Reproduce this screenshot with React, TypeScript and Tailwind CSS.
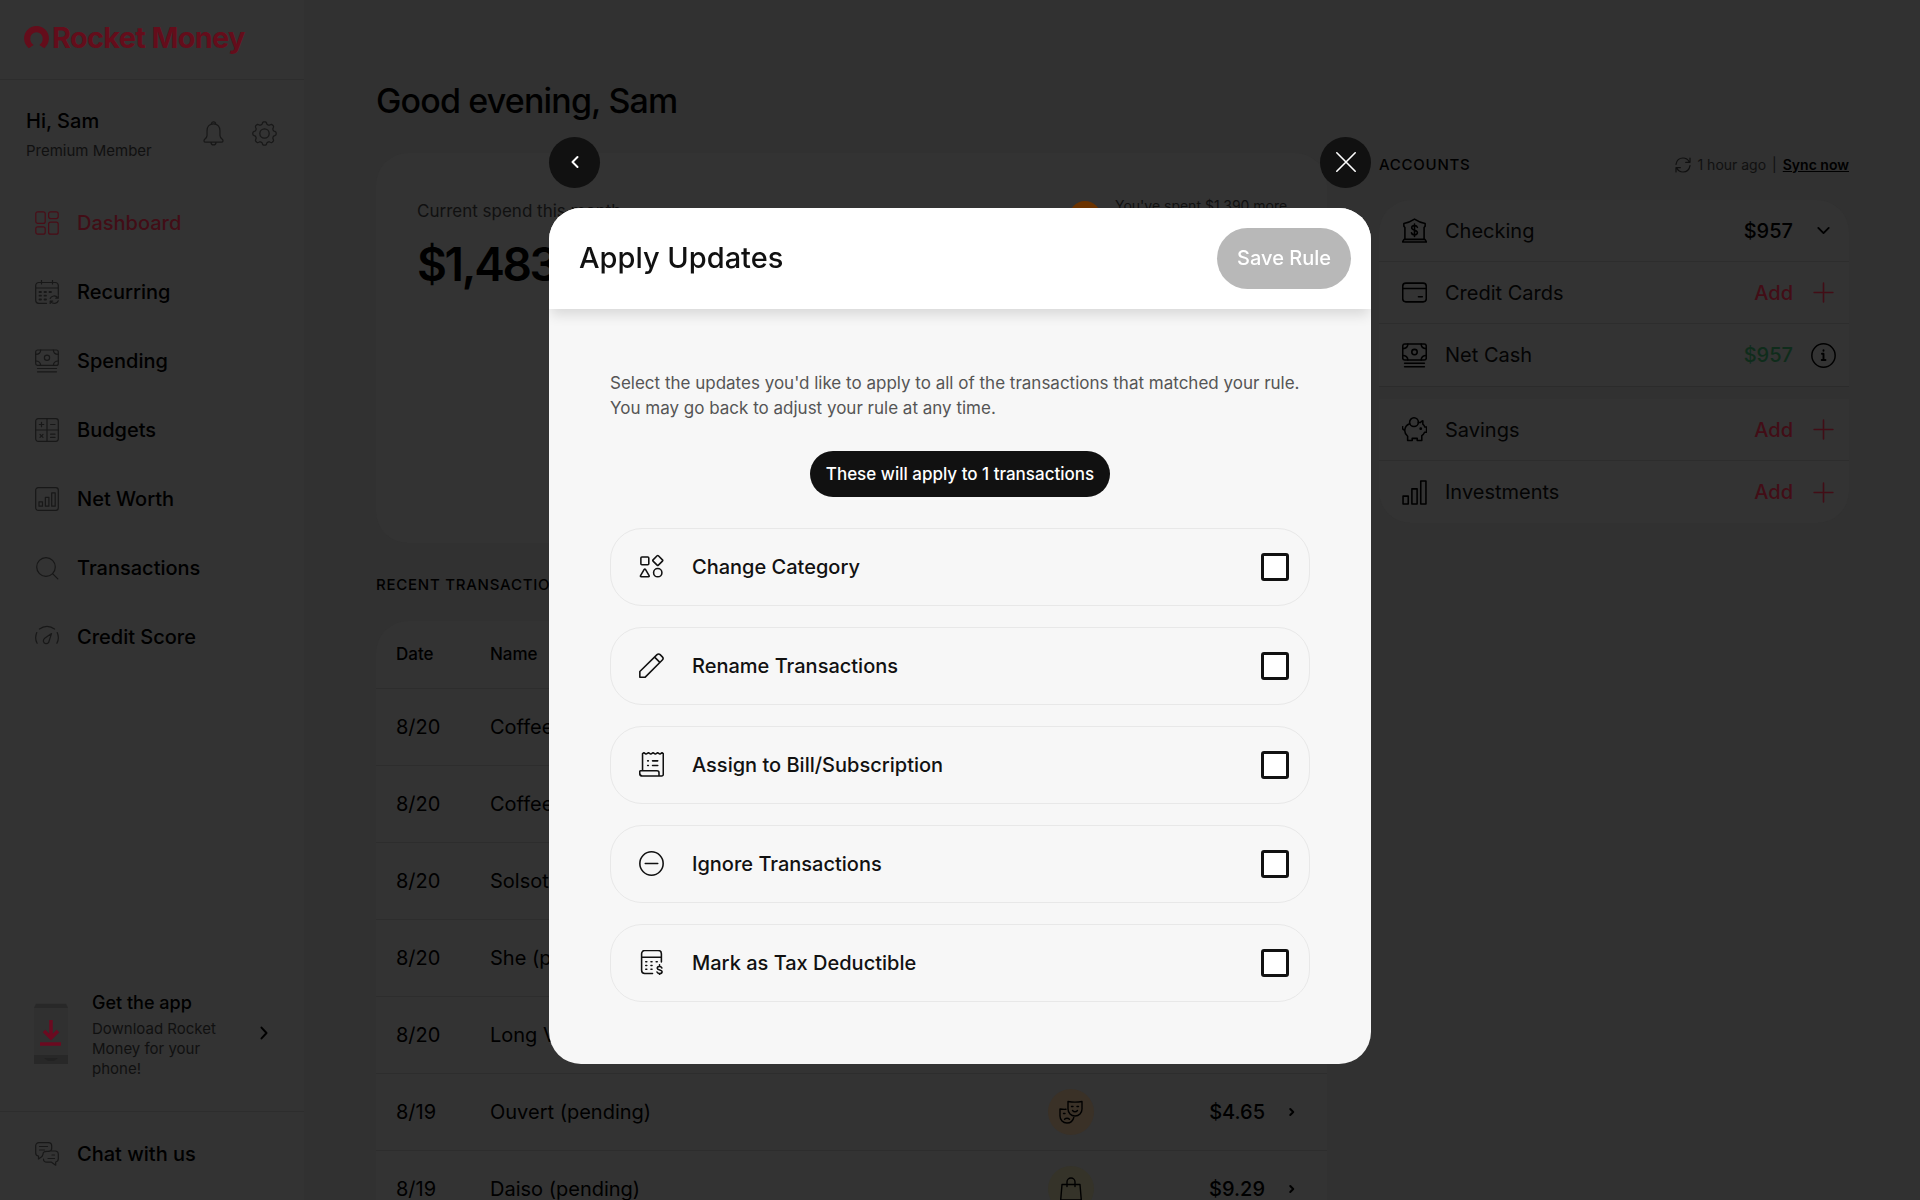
import { useState } from "react";
import type { ReactNode } from "react";

function Icon({ children, size = "size-6", width = 1.2 }: { children: ReactNode; size?: string; width?: number }) {
  return (
    <svg
      viewBox="0 0 24 24"
      className={`${size} shrink-0`}
      fill="none"
      stroke="currentColor"
      strokeWidth={width}
      strokeLinecap="round"
      strokeLinejoin="round"
      aria-hidden="true"
    >
      {children}
    </svg>
  );
}

const gearOutline =
  Array.from({ length: 96 }, (_, i) => {
    const a = (i / 96) * Math.PI * 2;
    const r = 10.1 + 1.2 * Math.tanh(1.8 * Math.cos(8 * a));
    return `${i === 0 ? "M" : "L"}${(12 + r * Math.cos(a)).toFixed(2)} ${(12 + r * Math.sin(a)).toFixed(2)}`;
  }).join("") + "z";

const cash = (
  <>
    <rect x=".7" y="1" width="22.6" height="15.4" rx="2" />
    <circle cx="12" cy="8.7" r="2.6" />
    <path d="M5.6 1c0 2.800-2 4.400-4.900 4.400M18.400 1c0 2.800 2 4.400 4.900 4.400M5.600 16.400c0-2.800-2-4.400-4.900-4.400M18.400 16.400c0-2.800 2-4.400 4.900-4.400M2.500 19.500h19M2.500 22.800h19" />
  </>
);

const bars = <path d="M1 15.500h5v7.500H1zM9.500 8.500h5V23h-5zM18 1h5v22h-5z" />;

const navItems: { label: string; active?: boolean; icon: ReactNode }[] = [
  {
    label: "Dashboard",
    active: true,
    icon: (
      <>
        <rect x=".8" y=".8" width="9.400" height="11.600" rx="2" />
        <rect x="13.600" y=".8" width="9.600" height="6.800" rx="2" />
        <rect x=".8" y="15.800" width="9.400" height="7.400" rx="2" />
        <rect x="13.600" y="11.200" width="9.600" height="12" rx="2" />
      </>
    ),
  },
  {
    label: "Recurring",
    icon: (
      <>
        <path d="M23.300 14.500V5.500a3 3 0 0 0-3-3H3.700a3 3 0 0 0-3 3v14.800a3 3 0 0 0 3 3h7.800M.7 8h22.600M6.500 .5v3.500M17.500 .5v3.500" />
        <path d="M4.500 12h1.500M9.500 12H11M14.500 12H16M4.500 15.700h1.500M9.500 15.700H11M4.500 19.500h1.500M9.500 19.500H11" strokeWidth="1.800" />
        <path d="M15.200 18.500c1-2.800 5.400-3.600 7.500-.8M23.300 15.600v2.600h-2.500M23.300 20.800c-1 2.800-5.400 3.600-7.500.8M15.200 23.700v-2.600h2.500" />
      </>
    ),
  },
  { label: "Spending", icon: cash },
  {
    label: "Budgets",
    icon: (
      <>
        <rect x=".7" y=".7" width="22.600" height="22.600" rx="2.500" />
        <path d="M12 .7v22.600M.7 12h22.600M6.500 4.300v4.400M4.300 6.500h4.400M15.600 6.500H20M5 16.300l3 3M8 16.300l-3 3M15.600 16.200H20M15.600 19.400H20" />
      </>
    ),
  },
  {
    label: "Net Worth",
    icon: (
      <>
        <rect x=".7" y=".7" width="22.600" height="22.600" rx="2.500" />
        <path d="M4 14.800h3.500v4.400H4zM10.400 10.300h3.500v8.900h-3.500zM16.700 5.800h3.500v13.400h-3.500z" />
      </>
    ),
  },
  {
    label: "Transactions",
    icon: (
      <>
        <circle cx="11" cy="11" r="9.300" />
        <path d="M17.800 17.800l5 5" />
      </>
    ),
  },
  {
    label: "Credit Score",
    icon: (
      <path d="M4.500 4c4.500-3.600 10.500-3.600 15 0M1.800 7.500c-1.500 3.500-1.500 7.500.3 10.800M22.200 7.500c1.500 3.500 1.500 7.500-.3 10.800M16.500 8.500l-6.800 4.800c-2.400 2-1.200 5 1 5.300 2 .2 3.300-1 3.500-2.800z" />
    ),
  },
];

const accountGroups: { label: string; value: string; kind: "balance" | "add" | "info"; icon: ReactNode }[][] = [
  [
    {
      label: "Checking",
      value: "$957",
      kind: "balance",
      icon: (
        <>
          <path d="M2.800 20.500V9.200L1.800 8V5.200C5.500 4.600 9 3 12 1c3 2 6.500 3.600 10.200 4.200V8l-1 1.200v11.300M.5 23l1.500-2.500h20L23.500 23z" />
          <path d="M14.800 9c-.4-1.200-1.500-1.700-2.800-1.700-1.600 0-2.700.8-2.700 2.100 0 3 5.500 1.600 5.500 4.600 0 1.400-1.200 2.200-2.800 2.200-1.500 0-2.600-.7-2.900-2M12 5.800v11.900" />
        </>
      ),
    },
    {
      label: "Credit Cards",
      value: "Add",
      kind: "add",
      icon: (
        <>
          <rect x=".7" y="3" width="22.600" height="18" rx="3" />
          <path d="M.7 8.200h22.600M15.800 16h3.700" />
        </>
      ),
    },
    { label: "Net Cash", value: "$957", kind: "info", icon: cash },
  ],
  [
    {
      label: "Savings",
      value: "Add",
      kind: "add",
      icon: (
        <>
          <circle cx="11.500" cy="5" r="4.200" />
          <path d="M15.700 5.200h2c.7-.9 1.300-1.300 2.300-1.500v3.200c1 .8 1.500 1.600 1.900 2.700h1.700v5h-1.900c-.6 1.400-1.600 2.500-2.700 3.200v4.700h-4.400v-2h-4.800v2H5.400v-4c-2-1.700-3-3.700-2.700-6.200.3-2.400 2-4.800 4.600-5.800M2.700 12.500C1 12.300 0 11 .6 9.400" />
          <circle cx="18" cy="11.200" r=".6" fill="currentColor" />
        </>
      ),
    },
    { label: "Investments", value: "Add", kind: "add", icon: bars },
  ],
];

const masks = (
  <>
    <path d="M9 1.500c4.700.8 9.300.8 14 0v7.500c0 4-3 7-7 7s-7-3-7-7zM12.500 6.500h1.500M18 6.500h1.500M13.500 10.500c1.500 1.700 3.500 1.700 5 0" />
    <path d="M7 9.300c-2 .1-4 0-6-.3v7c0 4 3 7 7 7 3.500 0 6-2.300 6.800-5.500M4.500 13.500h1.500M5.500 19.300c1.500-1.500 3.500-1.500 5 0" />
  </>
);

const bag = <path d="M3 7.500h18l1.300 15.500H1.700zM8 9.500V5c0-2.200 1.800-4 4-4s4 1.800 4 4v4.500" />;

const transactions: { date: string; name: string; amount: string; icon: ReactNode; tint: string }[] = [
  { date: "8/20", name: "Coffee (pending)", amount: "$5.75", icon: masks, tint: "bg-[#3a3127]" },
  { date: "8/20", name: "Coffee (pending)", amount: "$4.50", icon: masks, tint: "bg-[#3a3127]" },
  { date: "8/20", name: "Solsot (pending)", amount: "$8.00", icon: bag, tint: "bg-[#353329]" },
  { date: "8/20", name: "She (pending)", amount: "$6.25", icon: bag, tint: "bg-[#353329]" },
  { date: "8/20", name: "Long V (pending)", amount: "$7.10", icon: masks, tint: "bg-[#3a3127]" },
  { date: "8/19", name: "Ouvert (pending)", amount: "$4.65", icon: masks, tint: "bg-[#3a3127]" },
  { date: "8/19", name: "Daiso (pending)", amount: "$9.29", icon: bag, tint: "bg-[#353329]" },
];

const updates: { label: string; icon: ReactNode }[] = [
  {
    label: "Change Category",
    icon: (
      <>
        <rect x="1.800" y="2.800" width="7.600" height="7.600" rx="1" />
        <path d="M18.600 1.700l3.900 3.900c.4.400.4.800 0 1.200l-3.900 3.900c-.4.400-.8.400-1.200 0l-3.900-3.900c-.4-.4-.4-.8 0-1.200l3.900-3.900c.4-.4.8-.4 1.200 0zM6.200 14.800l3.500 6c.3.600.1 1-.6 1H2.100c-.7 0-.9-.4-.6-1l3.500-6c.4-.6.8-.6 1.200 0z" />
        <circle cx="18" cy="17.900" r="4" />
      </>
    ),
  },
  {
    label: "Rename Transactions",
    icon: <path d="M.8 23.200v-5.400L17.300 1.600c.9-.9 2.100-.9 3 0l2.100 2.100c.9.900.9 2.100 0 3L6 23.200zM15 4l5 5" />,
  },
  {
    label: "Assign to Bill/Subscription",
    icon: (
      <>
        <path d="M3.400 17.500V1.500l1.300-.8 2 1.300 2.400-1.300 2.200 1.300 2.200-1.300 2.200 1.300 2.200-1.300 2.200 1.300 2-1.300 1.200.8v20a1.500 1.500 0 0 1-1.500 1.500H3.200a2.500 2.500 0 0 1-2.500-2.500v-1.500c0-.6.4-1 1-1h15.500a2 2 0 0 1 2 2V23" />
        <path d="M8.300 8.500h.7M13 8.500h5M8.300 13h.7M13 13h5" />
      </>
    ),
  },
  {
    label: "Ignore Transactions",
    icon: (
      <>
        <circle cx="12" cy="12" r="11.200" />
        <path d="M6 12h12" />
      </>
    ),
  },
  {
    label: "Mark as Tax Deductible",
    icon: (
      <>
        <path d="M21.500 11.500V3.500a3 3 0 0 0-3-3h-13a3 3 0 0 0-3 3v16a3 3 0 0 0 3 3h7.500M2.500 7h19" />
        <path d="M6.500 11.200h1M11.500 11.200h1M16.500 11.200h1M6.500 14.800h1M11.500 14.800h1M6.500 18.500h1M11.500 18.500h1" />
        <path d="M22 17.200c-.4-1-1.300-1.400-2.300-1.400-1.300 0-2.200.6-2.200 1.600 0 2.300 4.700 1.300 4.700 3.500 0 1.100-1 1.700-2.400 1.700-1.200 0-2.100-.4-2.500-1.400M19.700 14.300v1.300M19.700 22.700V24" />
      </>
    ),
  },
];

function Sidebar() {
  return (
    <aside className="flex w-76 shrink-0 flex-col bg-[#333333]">
      <div className="flex h-20 items-center border-b border-[#2d2d2d] px-6">
        <a href="#home" className="flex items-center gap-[3px] pb-1 text-[#640d1b]" aria-label="Rocket Money">
          <svg viewBox="0 0 24 24" className="size-[25px] shrink-0" aria-hidden="true" fill="currentColor">
            <path d="M4.600 22.200A11.900 11.900 0 1 1 19.400 22.200L14.800 19.200C17.200 17.600 18 15.500 18 13A6 6 0 1 0 6 13C6 15.500 6.800 17.600 9.200 19.200z" />
          </svg>
          <span className="text-[29px] leading-9 font-bold tracking-tight whitespace-nowrap">Rocket Money</span>
        </a>
      </div>

      <div className="flex items-center justify-between pt-6 pr-[27px] pl-[26px]">
        <div>
          <p className="text-xl leading-[34px] font-medium">Hi, Sam</p>
          <p className="text-[15px] leading-[26px] text-[#101010]">Premium Member</p>
        </div>
        <div className="flex gap-[26px] pb-0.5 text-[#181818]">
          <button type="button" aria-label="Notifications">
            <Icon size="size-[25px]">
              <path d="M12 2.800c-4.200 0-6.200 3-6.200 6.500v4.500c0 1.400-.6 2.200-2 3.500-1.500 1.300-1.200 3 .7 3h15c1.900 0 2.200-1.700.7-3-1.400-1.300-2-2.100-2-3.500V9.300c0-3.500-2-6.500-6.200-6.500zM10 2.800c0-2.600 4-2.600 4 0M9.500 20.300c.3 3.600 4.700 3.600 5 0" />
            </Icon>
          </button>
          <button type="button" aria-label="Settings">
            <Icon size="size-[25px]">
              <circle cx="12" cy="12" r="4.500" />
              <path d={gearOutline} />
            </Icon>
          </button>
        </div>
      </div>

      <nav className="pt-6">
        <ul>
          {navItems.map((item) => (
            <li key={item.label}>
              <a href={`#${item.label}`} className="flex h-[69px] items-center gap-[18px] pl-[35px]">
                <span className={item.active ? "text-[#4a0d17]" : "text-[#181818]"}>
                  <Icon>{item.icon}</Icon>
                </span>
                <span className={item.active ? "text-xl font-medium text-[#420d16]" : "text-xl font-medium"}>{item.label}</span>
              </a>
            </li>
          ))}
        </ul>
      </nav>

      <a href="#app" className="mt-auto flex items-center border-b border-[#2d2d2d] pr-[30px] pb-8 pl-[34px]">
        <svg viewBox="0 0 34 61" className="w-[34px] shrink-0" aria-hidden="true">
          <path d="M0 4l2-4h30l2 4v53H0z" fill="#303030" />
          <path d="M0 5l2-4h30l2 4zM0 52h34v9H0z" fill="#282828" />
          <path d="M10 55h14l-4 3h-6z" fill="#222222" />
          <path d="M17 17v18M10 28l7 7 7-7M6 41h21" stroke="#6b0a20" strokeWidth="3.500" fill="none" />
        </svg>
        <span className="mr-auto ml-6 w-[130px]">
          <span className="block text-lg leading-8 font-medium">Get the app</span>
          <span className="block text-[15px] leading-5 text-[#101010]">Download Rocket Money for your phone!</span>
        </span>
        <Icon size="size-5" width={2.400}>
          <path d="M9 5.500l6 6.500-6 6.500" />
        </Icon>
      </a>

      <a href="#chat" className="flex h-[88px] items-center gap-[18px] pb-1 pl-[35px]">
        <span className="text-[#181818]">
          <Icon>
            <path d="M7 14.500l-3.500 2.500v-3c-1.800-.2-2.800-1.200-2.800-3V4c0-2 1.200-3.300 3.300-3.300h9.500c2 0 3.200 1.300 3.200 3.300v2.500c0 1.800-1 2.800-3.200 2.800h-2c-2 0-3.500 1.200-3.500 3zM4.500 4.500h8M4.500 8h5" />
            <path d="M16.700 9h3.300c2 0 3.300 1.200 3.300 3.200v4.600c0 1.800-1 2.900-2.600 3.200v3.200l-4.200-3h-4.800c-2 0-3.200-1.200-3.200-3M13 16.500h6.500M17 13h2.500" />
          </Icon>
        </span>
        <span className="text-xl font-medium">Chat with us</span>
      </a>
    </aside>
  );
}

function SpendCard() {
  return (
    <section className="flex h-[390px] items-start justify-between rounded-[32px] bg-[#333333] pt-[42px] pr-[30px] pl-[41px]">
      <div>
        <p className="text-[17px] leading-8 text-[#101010]">Current spend this month</p>
        <p className="text-[46px] leading-[74px] font-semibold tracking-tighter">$1,483</p>
      </div>
      <div className="flex items-center gap-[14px]">
        <span className="size-8 rounded-full bg-[#6b3300]" />
        <p className="w-[182px] text-sm leading-[22px] text-[#101010]">You&apos;ve spent $1,390 more than last month</p>
      </div>
    </section>
  );
}

function RecentTransactions() {
  return (
    <section>
      <h2 className="pt-[30px] pb-6 text-[15px] leading-6 font-medium tracking-wider">RECENT TRANSACTIONS</h2>
      <table className="w-full table-fixed overflow-hidden rounded-t-[32px] bg-[#333333] text-left">
        <thead>
          <tr className="h-[67px] border-b border-[#2d2d2d] text-[17px]">
            <th className="w-[114px] pl-5 font-medium">Date</th>
            <th className="font-medium">Name</th>
            <th className="w-[72px]" aria-label="Category" />
            <th className="w-[145px]" aria-label="Amount" />
            <th className="w-[62px]" aria-label="Details" />
          </tr>
        </thead>
        <tbody>
          {transactions.map((t, i) => (
            <tr key={i} className="h-[77px] border-b border-[#2d2d2d] text-xl">
              <td className="pl-5">{t.date}</td>
              <td>{t.name}</td>
              <td>
                <span className={`flex size-[46px] items-center justify-center rounded-full ${t.tint}`}>
                  <Icon width={1.400}>{t.icon}</Icon>
                </span>
              </td>
              <td className="text-right font-medium">{t.amount}</td>
              <td>
                <span className="flex justify-center pr-2">
                  <Icon size="size-3" width={4}>
                    <path d="M8.500 6l6 6-6 6" />
                  </Icon>
                </span>
              </td>
            </tr>
          ))}
        </tbody>
      </table>
    </section>
  );
}

function Accounts() {
  return (
    <section className="w-[470px] shrink-0">
      <div className="flex h-6 items-center justify-between">
        <h2 className="text-[15px] font-medium tracking-wider">ACCOUNTS</h2>
        <p className="flex items-center gap-[6px] text-sm text-[#101010]">
          <Icon size="size-4" width={1.800}>
            <path d="M1.500 11C2.500 5 7 1.500 12 1.500c4 0 7.500 2 9.500 6M22.500 1.500v6.500h-6.500M22.500 13c-1 6-5.500 9.500-10.500 9.500-4 0-7.500-2-9.500-6M1.500 22.500V16H8" />
          </Icon>
          <span>1 hour ago</span>
          <span>|</span>
          <a href="#sync" className="font-semibold text-black underline">
            Sync now
          </a>
        </p>
      </div>
      <div className="mt-[23px] flex flex-col gap-3">
        {accountGroups.map((group, g) => (
          <ul
            key={g}
            className={
              g === 0
                ? "divide-y divide-[#2d2d2d] rounded-t-[32px] border-b border-[#2b2b2b] bg-[#333333]"
                : "divide-y divide-[#2d2d2d] rounded-b-[32px] bg-[#333333]"
            }
          >
            {group.map((row) => (
              <li key={row.label} className="flex h-[62px] items-center pr-[13px] pl-[23px] text-xl">
                <Icon size="size-[25px]" width={1.500}>
                  {row.icon}
                </Icon>
                <span className="ml-[18px] flex-1 text-[#040404]">{row.label}</span>
                {row.kind === "add" ? (
                  <button type="button" className="flex items-center gap-[18px] font-medium text-[#420d16]">
                    {row.value}
                    <Icon size="size-[25px]" width={1.500}>
                      <path d="M3 12h18M12 3v18" />
                    </Icon>
                  </button>
                ) : row.kind === "balance" ? (
                  <button type="button" className="flex items-center gap-[18px] font-medium">
                    {row.value}
                    <Icon size="size-[25px]" width={1.800}>
                      <path d="M7 9.500l5 5 5-5" />
                    </Icon>
                  </button>
                ) : (
                  <button type="button" className="flex items-center gap-[18px] font-medium text-[#0f2c1b]">
                    {row.value}
                    <span className="text-black">
                      <Icon size="size-[25px]" width={1.400}>
                        <circle cx="12" cy="12" r="11.200" />
                        <path d="M10.500 10.300H12v6M10.300 16.300h3.600M12 7v.4" strokeWidth="1.800" />
                      </Icon>
                    </span>
                  </button>
                )}
              </li>
            ))}
          </ul>
        ))}
      </div>
    </section>
  );
}

function ApplyUpdatesDialog() {
  const [selected, setSelected] = useState<string[]>([]);
  const toggle = (label: string) =>
    setSelected((s) => (s.includes(label) ? s.filter((l) => l !== label) : [...s, label]));

  return (
    <div className="fixed inset-0 flex items-center justify-center">
      <div role="dialog" aria-modal="true" aria-labelledby="dialog-title" className="w-[822px]">
        <div className="flex justify-between pb-5">
          <button type="button" aria-label="Back" className="flex size-[51px] items-center justify-center rounded-full bg-[#111111] text-white">
            <Icon size="size-6" width={2}>
              <path d="M14.500 7L9.500 12l5 5" />
            </Icon>
          </button>
          <button type="button" aria-label="Close" className="flex size-[51px] items-center justify-center rounded-full bg-[#111111] text-white">
            <Icon size="size-6" width={1.600}>
              <path d="M2.800 2.800l18.400 18.400M21.200 2.800L2.800 21.200" />
            </Icon>
          </button>
        </div>

        <div className="overflow-hidden rounded-[32px] bg-[#f7f7f7] text-[#111111]">
          <header className="relative flex h-[101px] items-center justify-between bg-white pr-5 pl-[30px] shadow-[0_8px_12px_-2px_rgba(0,0,0,0.12)]">
            <h1 id="dialog-title" className="text-[29px] leading-9 font-medium">
              Apply Updates
            </h1>
            <button type="button" disabled className="h-[61px] rounded-full bg-[#b8b8b8] px-5 text-xl font-medium text-white">
              Save Rule
            </button>
          </header>

          <div className="flex flex-col items-center px-[61px] pt-[62px] pb-[62px]">
            <p className="w-full text-[17px] leading-[25px] text-[#555555]">
              Select the updates you&apos;d like to apply to all of the transactions that matched your rule.
              <br />
              You may go back to adjust your rule at any time.
            </p>
            <p className="mt-[30px] rounded-full bg-[#111111] px-4 text-[17px] leading-[46px] font-medium text-white">
              These will apply to 1 transactions
            </p>
            <ul className="mt-[31px] flex w-full flex-col gap-[21px]">
              {updates.map((u) => (
                <li key={u.label}>
                  <label className="flex h-[78px] items-center rounded-[32px] border border-[#e8e8e8] pr-5 pl-[28px]">
                    <Icon size="size-[25px]" width={1.500}>
                      {u.icon}
                    </Icon>
                    <span className="ml-7 flex-1 text-xl font-medium">{u.label}</span>
                    <input
                      type="checkbox"
                      checked={selected.includes(u.label)}
                      onChange={() => toggle(u.label)}
                      className="size-7 appearance-none rounded-[3px] border-3 border-[#111111] bg-white checked:bg-[#111111]"
                    />
                  </label>
                </li>
              ))}
            </ul>
          </div>
        </div>
      </div>
    </div>
  );
}

export default function App() {
  return (
    <div className="flex h-screen overflow-hidden bg-[#313131] font-['Inter',sans-serif] text-black">
      <Sidebar />
      <main className="min-w-0 flex-1 pt-[76px] pr-[71px] pl-[72px]">
        <h1 className="text-[34px] leading-[50px] font-medium tracking-tight">Good evening, Sam</h1>
        <div className="mt-[27px] flex items-start gap-[52px]">
          <div className="min-w-0 flex-1">
            <SpendCard />
            <RecentTransactions />
          </div>
          <Accounts />
        </div>
      </main>
      <ApplyUpdatesDialog />
    </div>
  );
}
